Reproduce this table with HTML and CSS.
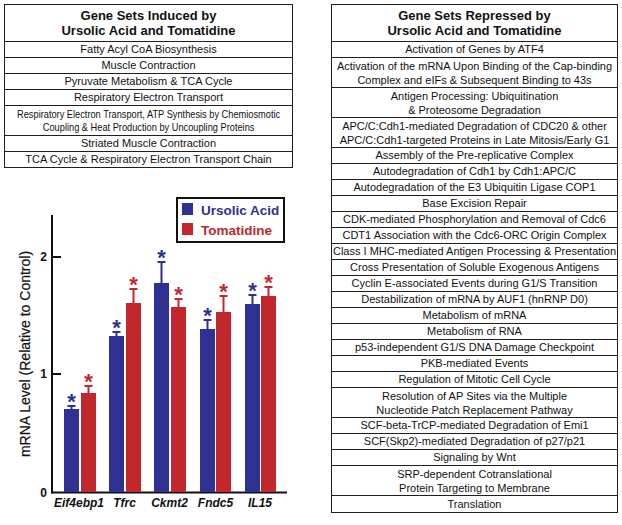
FILE: index.html
```html
<!DOCTYPE html>
<html>
<head>
<meta charset="utf-8">
<link rel="stylesheet" href="styles.css">
</head>
<body>
<div class="page">
  <div class="left">
    <div class="table induced">
      <div class="cell head">Gene Sets Induced by<br>Ursolic Acid and Tomatidine</div>
      <div class="cell">Fatty Acyl CoA Biosynthesis</div>
      <div class="cell">Muscle Contraction</div>
      <div class="cell">Pyruvate Metabolism &amp; TCA Cycle</div>
      <div class="cell">Respiratory Electron Transport</div>
      <div class="cell double"><span class="narrow">Respiratory Electron Transport, ATP Synthesis by Chemiosmotic<br>Coupling &amp; Heat Production by Uncoupling Proteins</span></div>
      <div class="cell">Striated Muscle Contraction</div>
      <div class="cell">TCA Cycle &amp; Respiratory Electron Transport Chain</div>
    </div>
    <svg class="chart" width="289" height="357" viewBox="4 168 289 357" xmlns="http://www.w3.org/2000/svg">
      <g class="axis">
        <line x1="52" y1="215" x2="52" y2="493.5"/>
        <line x1="51" y1="492.5" x2="287" y2="492.5"/>
        <line x1="52" y1="257" x2="61" y2="257"/>
        <line x1="52" y1="374" x2="61" y2="374"/>
      </g>
      <g class="ticklabels">
        <text x="47" y="261">2</text>
        <text x="47" y="378">1</text>
        <text x="47" y="497">0</text>
      </g>
      <text class="ylabel" transform="translate(30,354) rotate(-90)">mRNA Level (Relative to Control)</text>

      <g class="ua">
        <rect x="64" y="409" width="15" height="83"/>
        <rect x="109" y="336" width="15" height="156"/>
        <rect x="154" y="283" width="15" height="209"/>
        <rect x="200" y="329" width="15" height="163"/>
        <rect x="245" y="304" width="15" height="188"/>
        <path class="err" d="M71.5 409V406M67.5 406H75.5 M116.5 336V332M112.5 332H120.5 M161.5 283V262M157.5 262H165.5 M207.5 329V320M203.5 320H211.5 M252.5 304V295M248.5 295H256.5"/>
        <text class="star" x="71.5" y="409">*</text>
        <text class="star" x="116.5" y="335">*</text>
        <text class="star" x="161.5" y="265">*</text>
        <text class="star" x="207.5" y="323">*</text>
        <text class="star" x="252.5" y="298">*</text>
      </g>
      <g class="tom">
        <rect x="81" y="393" width="15" height="99"/>
        <rect x="126" y="303" width="15" height="189"/>
        <rect x="171" y="307" width="15" height="185"/>
        <rect x="216" y="312" width="15" height="180"/>
        <rect x="261" y="296" width="15" height="196"/>
        <path class="err" d="M88.5 393V386M84.5 386H92.5 M133.5 303V289M129.5 289H137.5 M178.5 307V299M174.5 299H182.5 M223.5 312V296M219.5 296H227.5 M268.5 296V287M264.5 287H272.5"/>
        <text class="star" x="88.5" y="389">*</text>
        <text class="star" x="133.5" y="292">*</text>
        <text class="star" x="178.5" y="302">*</text>
        <text class="star" x="223.5" y="299">*</text>
        <text class="star" x="268.5" y="290">*</text>
      </g>

      <g class="xlabels">
        <text x="79" y="507">Eif4ebp1</text>
        <text x="124.5" y="507">Tfrc</text>
        <text x="169.5" y="507">Ckmt2</text>
        <text x="215.5" y="507">Fndc5</text>
        <text x="260" y="507">IL15</text>
      </g>

      <g class="legend">
        <rect class="box" x="177" y="198" width="107" height="44"/>
        <rect class="sw-ua" x="182" y="203" width="11" height="12"/>
        <rect class="sw-tom" x="182" y="223" width="11" height="12"/>
        <text class="lt-ua" x="201" y="215">Ursolic Acid</text>
        <text class="lt-tom" x="201" y="235">Tomatidine</text>
      </g>
    </svg>
  </div>

  <div class="table repressed">
    <div class="cell head">Gene Sets Repressed by<br>Ursolic Acid and Tomatidine</div>
    <div class="cell">Activation of Genes by ATF4</div>
    <div class="cell double">Activation of the mRNA Upon Binding of the Cap-binding<br>Complex and eIFs &amp; Subsequent Binding to 43s</div>
    <div class="cell double">Antigen Processing: Ubiquitination<br>&amp; Proteosome Degradation</div>
    <div class="cell double">APC/C:Cdh1-mediated Degradation of CDC20 &amp; other<br>APC/C:Cdh1-targeted Proteins in Late Mitosis/Early G1</div>
    <div class="cell">Assembly of the Pre-replicative Complex</div>
    <div class="cell">Autodegradation of Cdh1 by Cdh1:APC/C</div>
    <div class="cell">Autodegradation of the E3 Ubiquitin Ligase COP1</div>
    <div class="cell">Base Excision Repair</div>
    <div class="cell">CDK-mediated Phosphorylation and Removal of Cdc6</div>
    <div class="cell">CDT1 Association with the Cdc6-ORC Origin Complex</div>
    <div class="cell">Class I MHC-mediated Antigen Processing &amp; Presentation</div>
    <div class="cell">Cross Presentation of Soluble Exogenous Antigens</div>
    <div class="cell">Cyclin E-associated Events during G1/S Transition</div>
    <div class="cell">Destabilization of mRNA by AUF1 (hnRNP D0)</div>
    <div class="cell">Metabolism of mRNA</div>
    <div class="cell">Metabolism of RNA</div>
    <div class="cell">p53-independent G1/S DNA Damage Checkpoint</div>
    <div class="cell">PKB-mediated Events</div>
    <div class="cell">Regulation of Mitotic Cell Cycle</div>
    <div class="cell double">Resolution of AP Sites via the Multiple<br>Nucleotide Patch Replacement Pathway</div>
    <div class="cell">SCF-beta-TrCP-mediated Degradation of Emi1</div>
    <div class="cell">SCF(Skp2)-mediated Degradation of p27/p21</div>
    <div class="cell">Signaling by Wnt</div>
    <div class="cell double">SRP-dependent Cotranslational<br>Protein Targeting to Membrane</div>
    <div class="cell">Translation</div>
  </div>
</div>
</body>
</html>
```

FILE: styles.css
```css
html, body {
  margin: 0;
  background: #ffffff;
}

body {
  font-family: "Liberation Sans", Arial, sans-serif;
  color: #111111;
}

.page {
  display: flex;
  align-items: flex-start;
  gap: 38px;
  padding: 4px 4px 0 4px;
}

.left {
  width: 289px;
  display: flex;
  flex-direction: column;
}

.table {
  box-sizing: border-box;
  border: 1px solid #1e1e1e;
  display: flex;
  flex-direction: column;
}

.induced {
  width: 289px;
}

.repressed {
  width: 287px;
  height: 509px;
}

.cell {
  box-sizing: border-box;
  height: 16px;
  border-top: 1px solid #1e1e1e;
  display: flex;
  align-items: center;
  justify-content: center;
  text-align: center;
  font-size: 11px;
  line-height: 13px;
  white-space: nowrap;
}

.cell.head {
  height: 36px;
  border-top: none;
  font-weight: bold;
  font-size: 13px;
  line-height: 15px;
}

.cell.double {
  height: 30px;
  line-height: 14px;
}

.repressed .cell:last-child {
  flex: 1;
}

.narrow {
  display: inline-block;
  transform: scaleX(0.84);
  line-height: 13px;
}

.chart {
  display: block;
  overflow: visible;
}

.axis line {
  stroke: #111111;
  stroke-width: 2;
}

.ticklabels text {
  font-family: "Liberation Sans", Arial, sans-serif;
  font-weight: bold;
  font-size: 12px;
  text-anchor: end;
  fill: #111111;
}

.ylabel {
  font-family: "Liberation Sans", Arial, sans-serif;
  font-size: 14px;
  text-anchor: middle;
  fill: #111111;
  stroke: #111111;
  stroke-width: 0.2;
}

.ua rect {
  fill: #2e3192;
}

.tom rect {
  fill: #c1272d;
}

.err {
  fill: none;
  stroke-width: 2;
}

.ua .err {
  stroke: #2e3192;
}

.tom .err {
  stroke: #c1272d;
}

.star {
  font-family: "Liberation Sans", Arial, sans-serif;
  font-weight: bold;
  font-size: 22px;
  text-anchor: middle;
}

.ua .star {
  fill: #2e3192;
}

.tom .star {
  fill: #c1272d;
}

.xlabels text {
  font-family: "Liberation Sans", Arial, sans-serif;
  font-weight: bold;
  font-style: italic;
  font-size: 12px;
  text-anchor: middle;
  fill: #111111;
}

.legend .box {
  fill: #ffffff;
  stroke: #111111;
  stroke-width: 2;
}

.sw-ua {
  fill: #2e3192;
}

.sw-tom {
  fill: #c1272d;
}

.legend text {
  font-family: "Liberation Sans", Arial, sans-serif;
  font-weight: bold;
  font-size: 13.5px;
}

.lt-ua {
  fill: #2e3192;
}

.lt-tom {
  fill: #c1272d;
}
```
